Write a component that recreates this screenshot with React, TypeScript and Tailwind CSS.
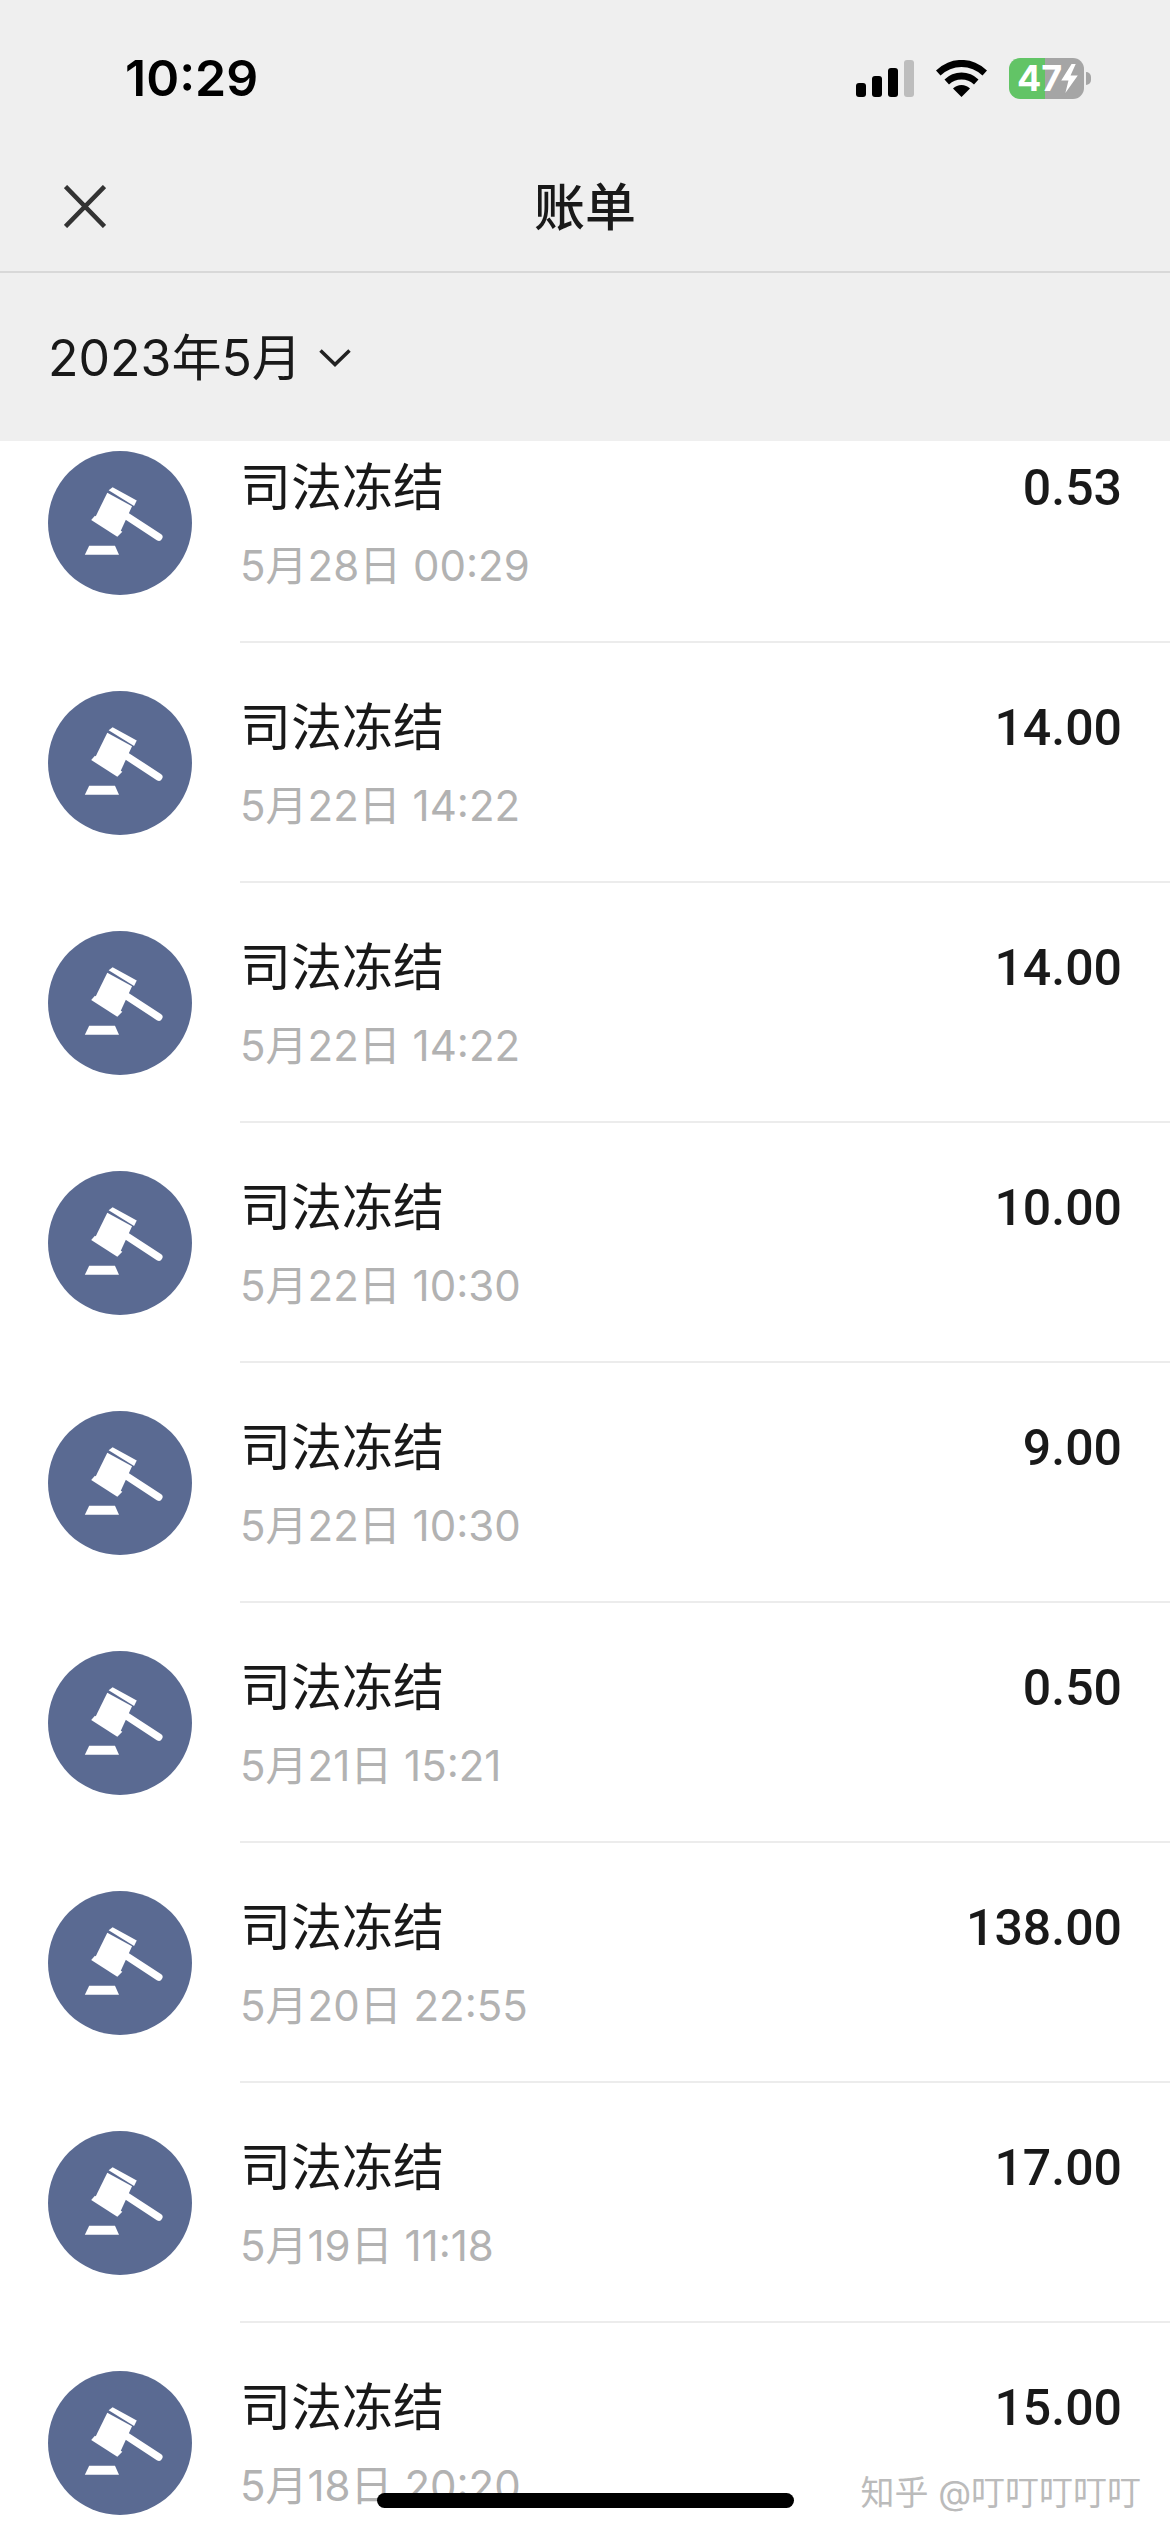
const FONT = "font-['Inter','Noto_Sans_CJK_SC',sans-serif]";

const RECORDS = [
  { date: '5月28日 00:29', amount: '0.53' },
  { date: '5月22日 14:22', amount: '14.00' },
  { date: '5月22日 14:22', amount: '14.00' },
  { date: '5月22日 10:30', amount: '10.00' },
  { date: '5月22日 10:30', amount: '9.00' },
  { date: '5月21日 15:21', amount: '0.50' },
  { date: '5月20日 22:55', amount: '138.00' },
  { date: '5月19日 11:18', amount: '17.00' },
  { date: '5月18日 20:20', amount: '15.00' },
];

function Gavel() {
  return (
    <svg viewBox="55 35 430 430" className="w-[144px] h-[144px] shrink-0">
      <circle cx="270" cy="250" r="215" fill="#5a6a92" />
      <g fill="#fff">
        <path d="M236 152 L248 143 L320 183 L312 199 Z" />
        <path d="M232 160 L306 200 L270 278 L195 235 Z" />
        <path d="M184 241 L195 228 L277 276 L262 291 Z" />
        <path d="M178 318 L255 318 L267 345 L165 345 Z" />
      </g>
      <path d="M285 226 L386 292" stroke="#fff" strokeWidth="22" strokeLinecap="round" />
    </svg>
  );
}

function StatusIcons() {
  return (
    <div className="flex items-center">
      <div className="flex items-end gap-[6px] h-[37px] w-[58px]">
        <div className="w-[10px] h-[14px] rounded-[3px] bg-black" />
        <div className="w-[10px] h-[21px] rounded-[3px] bg-black" />
        <div className="w-[10px] h-[29px] rounded-[3px] bg-black" />
        <div className="w-[10px] h-[37px] rounded-[3px] bg-[#bdbdbd]" />
      </div>
      <svg viewBox="0 0 51 37" className="w-[51px] h-[37px] ml-[22px]">
        <path d="M0 10.5 A36 36 0 0 1 51 10.5 L46.5 15.5 A30 30 0 0 0 4.5 15.5 Z" fill="#000" />
        <path d="M8.5 19.5 A24 24 0 0 1 42.5 19.5 L38 24.5 A18 18 0 0 0 13 24.5 Z" fill="#000" />
        <path d="M17 28.5 A12 12 0 0 1 34 28.5 L25.500 37 Z" fill="#000" />
      </svg>
      <div className="relative flex w-[75px] h-[41px] ml-[22px] rounded-[11px] overflow-hidden">
        <div className="w-[36px] bg-[#62c466]" />
        <div className="flex-1 bg-[#a5a5a5]" />
        <div className="absolute inset-0 flex items-center pl-[8px] text-white text-[36px] font-bold leading-none font-['Inter',sans-serif]">
          47
        </div>
        <svg viewBox="0 0 16 28" className="absolute right-[6px] top-[6px] w-[17px] h-[29px]">
          <path d="M10 0 L0 16 L7 16 L4 28 L16 11 L9 11 L14 0 Z" fill="#fff" />
        </svg>
      </div>
      <div className="w-[5px] h-[13px] ml-[2px] rounded-r-full bg-[#a5a5a5]" />
    </div>
  );
}

function Row({ date, amount }: { date: string; amount: string }) {
  return (
    <div className="flex items-center h-[240px] pl-[48px]">
      <Gavel />
      <div className="flex-1 h-full ml-[48px] pr-[48px] pt-[55px] border-b-2 border-[#ececec]">
        <div className="flex items-center justify-between h-[60px]">
          <span className="text-[51px] leading-[60px] text-[#191919]">司法冻结</span>
          <span className="text-[50px] leading-[60px] font-medium text-[#191919] font-['Roboto',sans-serif]">{amount}</span>
        </div>
        <div className="mt-[18px] text-[42px] leading-[60px] text-[#b2b2b2]">{date}</div>
      </div>
    </div>
  );
}

export default function App() {
  return (
    <div className={`relative flex flex-col w-[1170px] h-[2532px] overflow-hidden bg-white ${FONT}`}>
      <div className="bg-[#efefef] border-b-2 border-[#d8d8d8]">
        <div className="flex items-center justify-between h-[115px] pl-[125px] pr-[79px] pt-[41px]">
          <span className="text-[50px] leading-none font-semibold text-black">10:29</span>
          <StatusIcons />
        </div>
        <div className="relative flex items-center justify-center h-[156px]">
          <svg viewBox="0 0 42 43" className="absolute left-[64px] top-[70px] w-[42px] h-[43px]">
            <path d="M1.500 1.500 L40.500 41.500 M40.500 1.500 L1.500 41.500" stroke="#333" strokeWidth="4.500" fill="none" />
          </svg>
          <span className="text-[51px] leading-none font-medium text-[#191919] pt-[28px]">账单</span>
        </div>
      </div>
      <div className="flex items-center h-[168px] pl-[48px] pt-[2px] bg-[#efefef]">
        <span className="text-[50px] leading-none text-[#191919]">2023年5月</span>
        <svg viewBox="0 0 32 18" className="w-[32px] h-[18px] ml-[17px]">
          <path d="M1.500 1.500 L16 15.500 L30.500 1.500" stroke="#222" strokeWidth="3.500" fill="none" />
        </svg>
      </div>
      <div className="flex-1 overflow-hidden">
        <div className="-mt-[38px]">
          {RECORDS.map((r, i) => (
            <Row key={i} date={r.date} amount={r.amount} />
          ))}
        </div>
      </div>
      <div className="absolute right-[29px] bottom-[22px] text-[34px] leading-none text-[#bbbbbb]">
        知乎 @叮叮叮叮叮
      </div>
      <div className="absolute left-[377px] bottom-[24px] w-[417px] h-[15px] rounded-full bg-black" />
    </div>
  );
}
